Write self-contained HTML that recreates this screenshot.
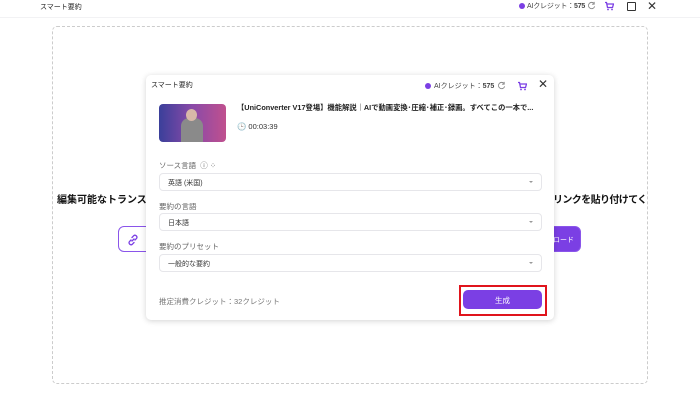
<!DOCTYPE html>
<html><head><meta charset="utf-8"><style>
*{margin:0;padding:0;box-sizing:border-box}
body{width:700px;height:400px;background:#fff;position:relative;overflow:hidden;font-family:"Liberation Sans","Noto Sans CJK JP",sans-serif;color:#222}
.a{position:absolute}
.dd{position:absolute;left:159px;width:383px;height:18px;border:1px solid #e6e6ea;border-radius:4px;font-size:7px;padding:4px 0 0 8px;color:#333}
.dd:after{content:"";position:absolute;right:8px;top:7px;border:2px solid transparent;border-top:2px solid #999}
.lbl{position:absolute;left:159px;font-size:7.5px;color:#666}
</style></head><body>
<div class="a" style="left:0;top:0;width:700px;height:18px;border-bottom:1px solid #f2f2f4"></div>
<div class="a" style="left:40px;top:2px;font-size:7px">スマート要約</div>
<div class="a" style="left:519px;top:3px;width:6px;height:6px;border-radius:50%;background:#7b3fe4"></div>
<div class="a" style="left:527px;top:1px;font-size:7px;color:#444;letter-spacing:-0.2px">AIクレジット：<b>575</b></div>
<svg class="a" style="left:587px;top:1px" width="9" height="9" viewBox="0 0 10 10"><path d="M8 3A3.5 3.5 0 1 0 8.5 6" fill="none" stroke="#888" stroke-width="1"/><path d="M8 1v2.5H5.5" fill="none" stroke="#888" stroke-width="1"/></svg>
<svg class="a" style="left:604px;top:1px" width="10" height="10" viewBox="0 0 10 10"><path d="M1 1.5h1.5l1 5h5l1-3.5H3" fill="none" stroke="#7b3fe4" stroke-width="1.3"/><circle cx="4" cy="8.5" r=".9" fill="#7b3fe4"/><circle cx="8" cy="8.5" r=".9" fill="#7b3fe4"/></svg>
<div class="a" style="left:627px;top:2px;width:9px;height:9px;border:1.3px solid #333;border-radius:1px"></div>
<div class="a" style="left:647px;top:-1px;font-size:12px;color:#333">✕</div>
<div class="a" style="left:52px;top:26px;width:596px;height:358px;border:1px dashed #ccc;border-radius:5px"></div>
<div class="a" style="left:57px;top:191px;font-size:10px;font-weight:bold;color:#111">編集可能なトランス</div>
<div class="a" style="left:553px;top:191px;font-size:10px;font-weight:bold;color:#111;white-space:nowrap;letter-spacing:-0.6px">リンクを貼り付けてく</div>
<div class="a" style="left:118px;top:226px;width:40px;height:26px;border:1.5px solid #8a55ea;border-radius:6px;padding:6px 0 0 8px"><svg width="12" height="12" viewBox="0 0 12 12"><path d="M5 7l2-2M4 6L2.5 7.5a2 2 0 0 0 2.8 2.8L7 8.5M8 6l1.5-1.5a2 2 0 0 0-2.8-2.8L5 3.5" fill="none" stroke="#7b3fe4" stroke-width="1.3" stroke-linecap="round"/></svg></div>
<div class="a" style="left:540px;top:226px;width:41px;height:26px;border:1.5px solid #8a55ea;border-radius:6px;background:#7b3fe4;color:#fff;font-size:7px;padding:8px 0 0 12px">ロード</div>
<div class="a" style="left:146px;top:75px;width:408px;height:245px;background:#fff;border-radius:5px;box-shadow:0 1px 6px rgba(0,0,0,.18)"></div>
<div class="a" style="left:151px;top:80px;font-size:7px">スマート要約</div>
<div class="a" style="left:425px;top:83px;width:6px;height:6px;border-radius:50%;background:#7b3fe4"></div>
<div class="a" style="left:434px;top:81px;font-size:7px;color:#444">AIクレジット：<b>575</b></div>
<svg class="a" style="left:497px;top:81px" width="9" height="9" viewBox="0 0 10 10"><path d="M8 3A3.5 3.5 0 1 0 8.5 6" fill="none" stroke="#888" stroke-width="1"/><path d="M8 1v2.5H5.5" fill="none" stroke="#888" stroke-width="1"/></svg>
<svg class="a" style="left:517px;top:81px" width="10" height="10" viewBox="0 0 10 10"><path d="M1 1.5h1.5l1 5h5l1-3.5H3" fill="none" stroke="#7b3fe4" stroke-width="1.3"/><circle cx="4" cy="8.5" r=".9" fill="#7b3fe4"/><circle cx="8" cy="8.5" r=".9" fill="#7b3fe4"/></svg>
<div class="a" style="left:538px;top:77px;font-size:12px;color:#333">✕</div>
<div class="a" style="left:159px;top:104px;width:67px;height:38px;border-radius:4px;overflow:hidden;background:linear-gradient(90deg,#3a3f9a,#8a4aa8 50%,#c0508e)"><div style="position:absolute;left:22px;top:14px;width:22px;height:26px;border-radius:8px 8px 0 0;background:#8a8a8a"></div><div style="position:absolute;left:27px;top:5px;width:11px;height:12px;border-radius:50%;background:#d8b8a8"></div></div>
<div class="a" style="left:237px;top:103px;font-size:7.3px;font-weight:bold;white-space:nowrap">【UniConverter V17登場】機能解説｜AIで動画変換･圧縮･補正･録画。すべてこの一本で...</div>
<div class="a" style="left:237px;top:122px;font-size:7.5px;color:#333">🕒 00:03:39</div>
<div class="lbl" style="top:160px">ソース言語 &nbsp;ⓘ ⁘</div>
<div class="dd" style="top:173px">英語 (米国)</div>
<div class="lbl" style="top:201px">要約の言語</div>
<div class="dd" style="top:213px">日本語</div>
<div class="lbl" style="top:241px">要約のプリセット</div>
<div class="dd" style="top:254px">一般的な要約</div>
<div class="a" style="left:159px;top:296px;font-size:7.5px;color:#777">推定消費クレジット：32クレジット</div>
<div class="a" style="left:459px;top:285px;width:88px;height:31px;border:2px solid #e0141c"></div>
<div class="a" style="left:463px;top:290px;width:79px;height:19px;border-radius:5px;background:#7b3fe4;color:#fff;font-size:7.5px;text-align:center;padding-top:5px">生成</div>
</body></html>
